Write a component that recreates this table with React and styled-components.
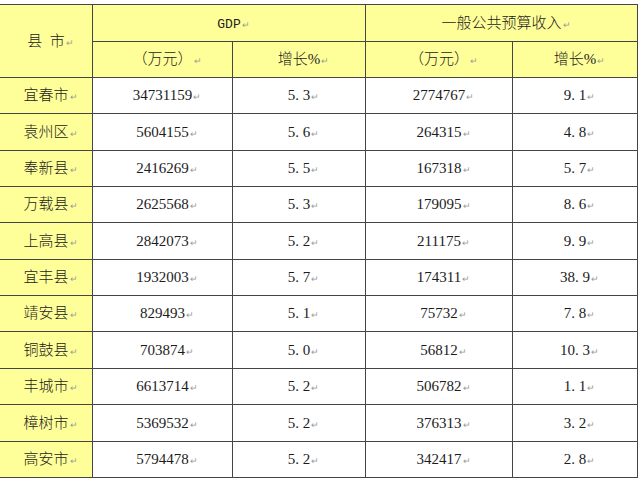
import React from "react";
import styled, { createGlobalStyle } from "styled-components";

const GlobalStyle = createGlobalStyle`
  html, body {
    margin: 0;
    padding: 0;
    background: #ffffff;
  }
`;

const YELLOW = "#ffff99";
const LINE = "#454545";

const rows = [
  ["宜春市", "34731159", "5.3", "2774767", "9.1"],
  ["袁州区", "5604155", "5.6", "264315", "4.8"],
  ["奉新县", "2416269", "5.5", "167318", "5.7"],
  ["万载县", "2625568", "5.3", "179095", "8.6"],
  ["上高县", "2842073", "5.2", "211175", "9.9"],
  ["宜丰县", "1932003", "5.7", "174311", "38.9"],
  ["靖安县", "829493", "5.1", "75732", "7.8"],
  ["铜鼓县", "703874", "5.0", "56812", "10.3"],
  ["丰城市", "6613714", "5.2", "506782", "1.1"],
  ["樟树市", "5369532", "5.2", "376313", "3.2"],
  ["高安市", "5794478", "5.2", "342417", "2.8"]
];

const Sheet = styled.div`
  margin-top: 4px;
  width: 638px;
  display: grid;
  grid-template-columns: 93px 140px 133px 147px 125px;
  grid-template-rows: 37px 36px 36px 37px 36px 36px 37px 36px 36px 37px 36px 37px 36px;
  border-top: 1px solid ${LINE};
  font-family: "Liberation Serif", "Noto Sans CJK SC", serif;
  font-size: 15px;
  font-weight: 300;
  color: #1c1c1c;
`;

const Cell = styled.div`
  box-sizing: border-box;
  display: flex;
  align-items: center;
  justify-content: center;
  line-height: 1;
  white-space: nowrap;
  background: ${p => (p.$head ? YELLOW : "#ffffff")};
  border-right: 1px solid ${LINE};
  border-bottom: 1px solid ${LINE};
  grid-column: span ${p => p.$cols || 1};
  grid-row: span ${p => p.$rows || 1};
`;

const Mono = styled.span`
  font-family: "Liberation Mono", monospace;
  font-size: 13px;
`;

const Dot = styled.span`
  display: inline-block;
  width: 7.5px;
  text-align: left;
`;

// word-style paragraph mark, not counted in the centering
const Mark = styled.span`
  display: inline-block;
  width: 0;
  overflow: visible;
  &::after {
    content: "↵";
    padding-left: 1px;
    font-family: "DejaVu Sans", sans-serif;
    font-size: 9px;
    color: #9a9a9a;
  }
`;

const Decimal = ({ value }) => {
  const [whole, frac] = value.split(".");
  return (
    <>
      {whole}
      <Dot>.</Dot>
      {frac}
    </>
  );
};

const Text = ({ children }) => (
  <span>
    {children}
    <Mark />
  </span>
);

const App = () => (
  <>
    <GlobalStyle />
    <Sheet>
      <Cell $head $rows={2}>
        <Text>县{"\u2002"}市</Text>
      </Cell>
      <Cell $head $cols={2}>
        <Text>
          <Mono>GDP</Mono>
        </Text>
      </Cell>
      <Cell $head $cols={2}>
        <Text>一般公共预算收入</Text>
      </Cell>
      <Cell $head>
        <Text>（万元）</Text>
      </Cell>
      <Cell $head>
        <Text>增长%</Text>
      </Cell>
      <Cell $head>
        <Text>（万元）</Text>
      </Cell>
      <Cell $head>
        <Text>增长%</Text>
      </Cell>
      {rows.map(([name, gdp, gdpRate, income, incomeRate]) => (
        <React.Fragment key={name}>
          <Cell $head>
            <Text>{name}</Text>
          </Cell>
          <Cell>
            <Text>{gdp}</Text>
          </Cell>
          <Cell>
            <Text>
              <Decimal value={gdpRate} />
            </Text>
          </Cell>
          <Cell>
            <Text>{income}</Text>
          </Cell>
          <Cell>
            <Text>
              <Decimal value={incomeRate} />
            </Text>
          </Cell>
        </React.Fragment>
      ))}
    </Sheet>
  </>
);

export default App;
